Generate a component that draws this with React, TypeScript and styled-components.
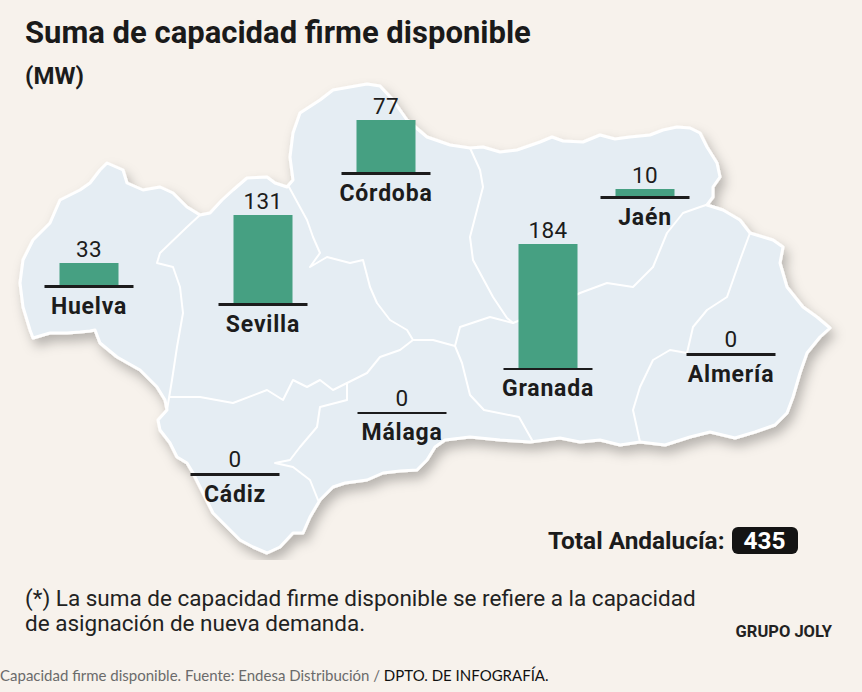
import React from "react";
import styled, { createGlobalStyle } from "styled-components";

const GlobalStyle = createGlobalStyle`
  html, body {
    margin: 0;
    padding: 0;
    background: #f7f2ec;
  }
  body {
    font-family: Roboto, "Liberation Sans", sans-serif;
    color: #1c1c1c;
  }
`;

const MAP_TOP = 78;
const MAP_HEIGHT = 482;
const PX_PER_MW = 0.675;

const Page = styled.div`
  width: 862px;
  height: 692px;
  overflow: hidden;
  display: flex;
  flex-direction: column;
  background: #f7f2ec;
`;

const Header = styled.header`
  padding: 15px 0 0 25px;
`;

const Title = styled.h1`
  margin: 0;
  font-size: 31px;
  line-height: 36px;
  font-weight: 700;
  color: #1a1a1a;
`;

const Unit = styled.div`
  margin-top: 11px;
  font-size: 24px;
  line-height: 28px;
  font-weight: 700;
`;

const MapCanvas = styled.div`
  position: relative;
  height: ${MAP_HEIGHT}px;
  margin-top: -12px;
`;

const MapSvg = styled.svg`
  display: block;
`;

const Pin = styled.div`
  position: absolute;
  width: 89px;
  display: flex;
  flex-direction: column;
  align-items: center;
  transform: translateX(-50%);
`;

const Value = styled.div`
  font-size: 22.5px;
  line-height: 22px;
  margin-bottom: 3px;
  font-weight: 400;
  letter-spacing: 0.3px;
`;

const Bar = styled.div`
  width: 59px;
  background: #46a082;
`;

const Baseline = styled.div`
  width: 89px;
  height: 2.5px;
  background: #1c1c1c;
`;

const Name = styled.div`
  margin-top: 8px;
  font-size: 23px;
  line-height: 22px;
  font-weight: 700;
  letter-spacing: 0.8px;
  white-space: nowrap;
`;

const TotalRow = styled.div`
  position: absolute;
  left: 548px;
  top: ${526 - MAP_TOP}px;
  display: flex;
  align-items: center;
  gap: 7px;
  font-size: 24.4px;
  font-weight: 700;
`;

const Badge = styled.span`
  display: inline-block;
  height: 27px;
  line-height: 27px;
  padding: 0 12px;
  border-radius: 6px;
  background: #141414;
  color: #fff;
`;

const Notes = styled.div`
  margin-top: 26px;
  padding: 0 30px 0 25px;
  display: flex;
  justify-content: space-between;
  align-items: flex-end;
`;

const Footnote = styled.p`
  margin: 0;
  font-size: 22.5px;
  line-height: 25px;
  color: #222;
`;

const Brand = styled.div`
  font-size: 16.5px;
  line-height: 18px;
  font-weight: 700;
  margin-bottom: -5px;
  color: #222;
`;

const Caption = styled.div`
  margin-top: 29px;
  font-family: Lato, "Open Sans", sans-serif;
  font-size: 15px;
  line-height: 20px;
  color: #6b6b6b;
  white-space: nowrap;
`;

const CaptionStrong = styled.span`
  color: #111;
`;

type Pt = [number, number];

const OUTLINE: Pt[] = [
  [107, 163], [123, 170], [127, 183], [143, 190], [160, 187], [173, 193], [187, 207],
  [200, 215], [210, 213], [222, 200], [233, 190], [247, 178], [267, 177], [275, 183],
  [287, 187], [293, 180], [290, 157], [293, 133], [300, 113], [320, 100], [333, 90],
  [350, 87], [367, 84], [380, 86], [393, 100], [407, 120], [427, 137], [450, 145],
  [470, 148], [483, 147], [500, 152], [517, 150], [540, 142], [552, 137], [563, 141],
  [583, 142], [600, 135], [615, 139], [630, 137], [650, 135], [663, 130], [677, 127],
  [690, 128], [700, 133], [707, 147], [717, 163], [720, 177], [713, 187], [713, 197],
  [707, 205], [723, 210], [740, 220], [750, 233], [773, 240], [783, 247], [780, 263],
  [787, 287], [803, 307], [817, 317], [830, 328], [820, 337], [807, 353], [800, 373],
  [793, 397], [787, 413], [775, 425], [755, 432], [735, 438], [710, 432], [690, 437],
  [665, 445], [640, 442], [620, 445], [600, 440], [580, 442], [560, 438], [530, 442],
  [500, 440], [470, 437], [445, 440], [435, 447], [427, 460], [417, 470], [400, 471],
  [383, 473], [367, 480], [345, 483], [333, 487], [320, 500], [310, 517], [303, 533],
  [293, 533], [280, 547], [267, 553], [253, 547], [240, 540], [227, 527], [213, 513],
  [203, 493], [193, 473], [187, 463], [177, 457], [170, 443], [160, 430], [158, 420],
  [167, 410], [165, 400], [157, 387], [140, 370], [117, 357], [100, 343], [95, 330],
  [90, 331], [80, 332], [67, 333], [50, 333], [33, 338], [30, 330], [23, 307],
  [20, 283], [23, 260], [33, 240], [50, 223], [60, 200], [80, 190], [90, 183], [100, 170],
];

const BORDERS: Pt[][] = [
  // Huelva / Sevilla
  [[200, 215], [187, 227], [160, 253], [157, 263], [173, 267], [180, 287], [183, 313], [177, 347], [172, 380], [167, 410]],
  // Sevilla / Cádiz
  [[170, 397], [200, 397], [233, 403], [267, 390], [283, 400], [293, 380], [307, 387], [320, 380], [333, 390], [347, 383]],
  // Sevilla / Málaga
  [[347, 383], [367, 373], [380, 357], [400, 350], [413, 340]],
  // Cádiz / Málaga
  [[347, 383], [347, 400], [320, 407], [317, 427], [300, 447], [290, 460], [275, 463], [293, 467], [310, 480], [318, 500]],
  // Sevilla / Córdoba
  [[289, 187], [307, 220], [313, 237], [320, 253], [310, 267], [327, 257], [350, 263], [363, 260], [370, 287], [377, 303], [390, 320], [407, 330], [413, 340]],
  // Córdoba / Málaga
  [[413, 340], [433, 340], [455, 346]],
  // Córdoba / Granada
  [[455, 346], [460, 327], [490, 317], [513, 323]],
  // Córdoba / Jaén
  [[470, 148], [480, 170], [483, 187], [477, 210], [470, 237], [473, 260], [493, 297], [507, 318], [513, 323]],
  // Jaén / Granada
  [[513, 323], [545, 310], [580, 293], [607, 283], [633, 287], [653, 267], [667, 233], [683, 213], [700, 207], [709, 204]],
  // Málaga / Granada
  [[455, 346], [462, 363], [470, 395], [484, 410], [519, 417], [532, 440]],
  // Granada / Almería
  [[750, 233], [740, 260], [733, 280], [727, 297], [707, 310], [693, 327], [687, 353], [670, 350], [653, 360], [640, 387], [633, 410], [640, 442]],
];

const toPath = (pts: Pt[], close = false) =>
  pts.map((p, i) => `${i === 0 ? "M" : "L"}${p[0]} ${p[1]}`).join(" ") + (close ? " Z" : "");

const PROVINCES = [
  { name: "Huelva", value: 33, x: 89, lineY: 285 },
  { name: "Sevilla", value: 131, x: 263, lineY: 303 },
  { name: "Córdoba", value: 77, x: 386, lineY: 172 },
  { name: "Jaén", value: 10, x: 645, lineY: 196 },
  { name: "Granada", value: 184, x: 548, lineY: 367.5 },
  { name: "Almería", value: 0, x: 731, lineY: 353 },
  { name: "Málaga", value: 0, x: 402, lineY: 411.5 },
  { name: "Cádiz", value: 0, x: 235, lineY: 473 },
];

function AndaluciaMap() {
  return (
    <MapSvg width={862} height={MAP_HEIGHT} viewBox={`0 ${MAP_TOP} 862 ${MAP_HEIGHT}`}>
      <defs>
        <filter id="mapShadow" x="-10%" y="-10%" width="120%" height="130%">
          <feDropShadow dx="4" dy="7" stdDeviation="6" floodColor="#000" floodOpacity="0.26" />
        </filter>
      </defs>
      <path
        d={toPath(OUTLINE, true)}
        fill="#e5edf3"
        stroke="#fff"
        strokeWidth={3}
        strokeLinejoin="round"
        filter="url(#mapShadow)"
      />
      {BORDERS.map((b, i) => (
        <path
          key={i}
          d={toPath(b)}
          fill="none"
          stroke="#fff"
          strokeWidth={2}
          strokeLinejoin="round"
          strokeLinecap="round"
        />
      ))}
    </MapSvg>
  );
}

export default function App() {
  const total = PROVINCES.reduce((sum, p) => sum + p.value, 0);

  return (
    <Page>
      <GlobalStyle />
      <Header>
        <Title>Suma de capacidad firme disponible</Title>
        <Unit>(MW)</Unit>
      </Header>

      <MapCanvas>
        <AndaluciaMap />
        {PROVINCES.map(p => {
          const barHeight = Math.round(p.value * PX_PER_MW);
          return (
            <Pin key={p.name} style={{ left: p.x, top: p.lineY - barHeight - 25 - MAP_TOP }}>
              <Value>{p.value}</Value>
              <Bar style={{ height: barHeight }} />
              <Baseline />
              <Name>{p.name}</Name>
            </Pin>
          );
        })}
        <TotalRow>
          Total Andalucía: <Badge>{total}</Badge>
        </TotalRow>
      </MapCanvas>

      <Notes>
        <Footnote>
          (*) La suma de capacidad firme disponible se refiere a la capacidad
          <br />
          de asignación de nueva demanda.
        </Footnote>
        <Brand>GRUPO JOLY</Brand>
      </Notes>

      <Caption>
        Capacidad firme disponible. Fuente: Endesa Distribución /{" "}
        <CaptionStrong>DPTO. DE INFOGRAFÍA.</CaptionStrong>
      </Caption>
    </Page>
  );
}
